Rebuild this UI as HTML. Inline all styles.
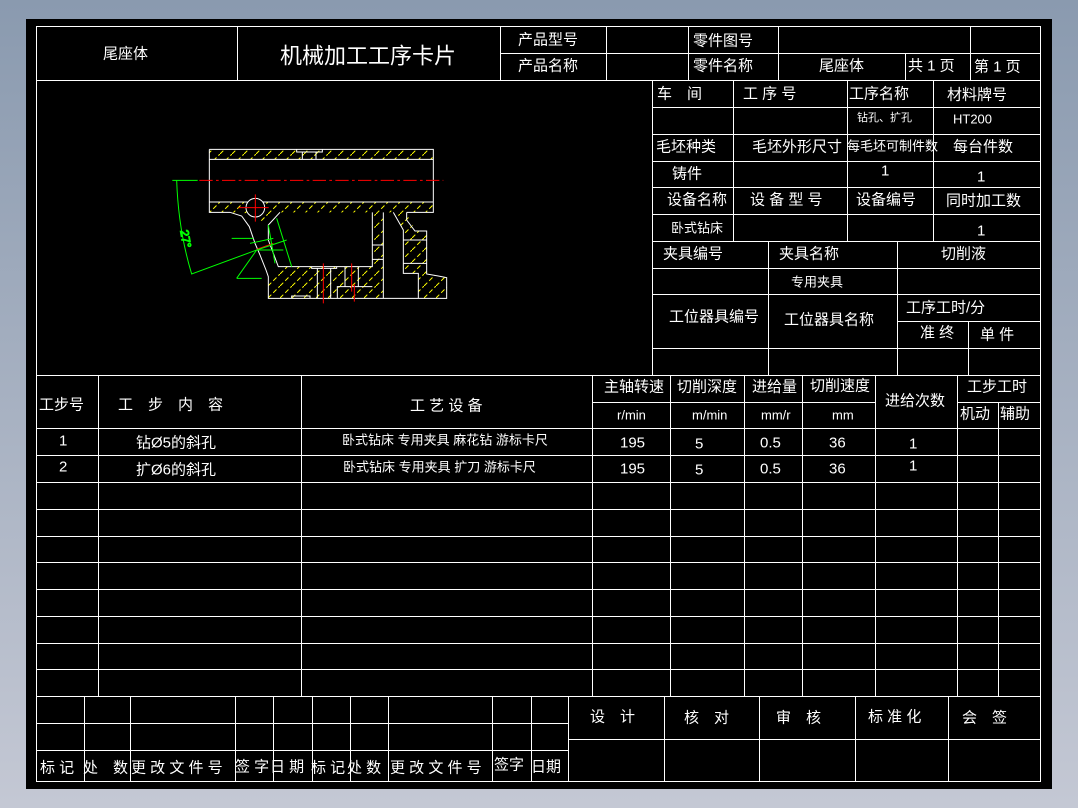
<!DOCTYPE html>
<html><head><meta charset="utf-8"><style>
html,body{margin:0;padding:0;width:1078px;height:808px;overflow:hidden;background:linear-gradient(#8a9aaf,#c4c8d4);}
svg{display:block}
text{font-family:"Liberation Sans","Noto Sans CJK SC",sans-serif;fill:#fff;font-size:15px;dominant-baseline:central}
.s{font-size:11px}.m{font-size:13px}
</style></head><body>
<svg width="1078" height="808" viewBox="0 0 1078 808">
<defs>
<pattern id="h" patternUnits="userSpaceOnUse" width="36" height="36">
<line x1="0" y1="36" x2="36" y2="0" stroke="#ffff00" stroke-width="3" stroke-dasharray="14 8"/>
</pattern>
</defs>
<rect x="26" y="19" width="1026" height="770" fill="#000"/>
<g stroke="#fff" stroke-width="1" fill="none" shape-rendering="crispEdges">
<rect x="36.5" y="26.5" width="1004" height="755"/>
<path d="M500 53.5H1040M36 80.5H1040M237.5 26V80M500.5 26V80M606.5 26V80M688.5 26V80M778.5 26V80M905.5 53V80M970.5 26V80"/>
<path d="M652.5 80V375M652 107.5H1040M652 134.5H1040M652 161.5H1040M652 187.5H1040M652 214.5H1040M652 241.5H1040M733.5 80V241M847.5 80V241M933.5 80V241"/>
<path d="M652 268.5H1040M652 294.5H1040M768.5 241V375M897.5 241V375M897 321.5H1040M652 348.5H1040M968.5 321V375"/>
<path d="M36 375.5H1040"/>
<path d="M98.5 375V696M301.5 375V696M592.5 375V696M670.5 375V696M744.5 375V696M802.5 375V696M875.5 375V696M957.5 375V696M998.5 402V696"/>
<path d="M592 402.5H875M957 402.5H1040M36 428.5H1040M36 455.5H1040M36 482.5H1040M36 509.5H1040M36 536.5H1040M36 562.5H1040M36 589.5H1040M36 616.5H1040M36 643.5H1040M36 669.5H1040M36 696.5H1040"/>
<path d="M36 723.5H568M36 750.5H568M568 739.5H1040M84.5 696V781M130.5 696V781M235.5 696V781M273.5 696V781M312.5 696V781M350.5 696V781M388.5 696V781M492.5 696V781M531.5 696V781M568.5 696V781M664.5 696V781M759.5 696V781M855.5 696V781M948.5 696V781"/>
</g>
<g transform="translate(160,130) scale(0.33333)" fill="none" stroke-width="3">
<g fill="url(#h)" stroke="none">
<rect x="148" y="58" width="672" height="30"/>
<polygon points="148,216 820,216 820,247 700,247 670,247 637,247 360,247 325,285 300,270 270,250 210,247 148,247"/>
<polygon points="325,505 325,440 360,410 637,410 637,247 670,247 670,505"/>
<polygon points="740,247 765,303 800,303 800,432 860,443 860,505 775,505 775,430 730,430 730,300 700,247"/>
</g>
<g stroke="#fff">
<path d="M148 58H820V247H740M148 58V247H210M148 88H820M148 216H820"/>
<path d="M410 58V66H487V58M427 66V88M468 66V88"/>
<path d="M210 247L245 258L268 290L285 340L300 375L318 420L325 440V505H860V443L835 438L800 432V303H765L740 270V247"/>
<path d="M360 247L325 285V330L355 410H637V247M637 345H670M637 388H670M670 247V505M700 247L730 300V430H775V505M730 330H800M730 400H800"/>
<path d="M455 410V415H530V410M472 415V505M512 415V505M532 505V470H637M555 410V470M595 410V470M395 505V498H450V505"/>
<circle cx="286" cy="233" r="28" fill="#000"/>
</g>
<g stroke="#ff0000">
<path d="M118 151H850" stroke-dasharray="40 10 8 10"/>
<path d="M236 233H326M286 193V275M290 358L340 340M490 400V520M575 400V485M583 462V515"/>
</g>
<g stroke="#00ff00">
<path d="M37 151H113M50 151Q55 300 95 432L290 360M230 445H305M230 445L290 360M215 325H280M270 340L340 325M325 285L345 400M350 265L395 410M290 360L380 330M290 360L370 360"/>
<text x="72" y="300" style="fill:#00ff00;font-size:36px" transform="rotate(80 72 300)">27°</text>
</g>
</g>
<text x="103" y="54">尾座体</text>
<text x="280" y="56" style="font-size:22px">机械加工工序卡片</text>
<text x="518" y="40">产品型号</text><text x="518" y="66">产品名称</text>
<text x="693" y="41">零件图号</text><text x="693" y="66">零件名称</text>
<text x="819" y="66">尾座体</text><text x="908" y="66">共 1 页</text><text x="974" y="67">第 1 页</text>
<text x="657" y="94">车　间</text><text x="743" y="94">工 序 号</text><text x="849" y="94">工序名称</text><text x="947" y="95">材料牌号</text>
<text class="s" x="857" y="118">钻孔、扩孔</text><text class="m" x="953" y="119">HT200</text>
<text x="656" y="147">毛坯种类</text><text x="752" y="147">毛坯外形尺寸</text><text class="m" x="847" y="146">每毛坯可制件数</text><text x="953" y="147">每台件数</text>
<text x="672" y="174">铸件</text><text x="881" y="171">1</text><text x="977" y="177">1</text>
<text x="667" y="200">设备名称</text><text x="750" y="200">设 备 型 号</text><text x="856" y="200">设备编号</text><text x="946" y="201">同时加工数</text>
<text class="m" x="671" y="228">卧式钻床</text><text x="977" y="231">1</text>
<text x="663" y="254">夹具编号</text><text x="779" y="254">夹具名称</text><text x="941" y="254">切削液</text>
<text class="m" x="791" y="282">专用夹具</text>
<text x="669" y="317">工位器具编号</text><text x="784" y="320">工位器具名称</text><text x="906" y="308">工序工时/分</text>
<text x="920" y="333">准 终</text><text x="980" y="335">单 件</text>
<text x="39" y="405">工步号</text><text x="118" y="405">工　步　内　容</text><text x="410" y="406">工 艺 设 备</text>
<text x="604" y="387">主轴转速</text><text x="677" y="387">切削深度</text><text x="752" y="387">进给量</text><text x="810" y="386">切削速度</text>
<text x="885" y="401">进给次数</text><text x="967" y="387">工步工时</text>
<text class="m" x="617" y="415">r/min</text><text class="m" x="692" y="415">m/min</text><text class="m" x="761" y="415">mm/r</text><text class="m" x="832" y="415">mm</text>
<text x="960" y="414">机动</text><text x="1000" y="414">辅助</text>
<text x="59" y="441">1</text><text x="136" y="443">钻Ø5的斜孔</text><text class="m" x="342" y="440">卧式钻床 专用夹具 麻花钻 游标卡尺</text>
<text x="620" y="443">195</text><text x="695" y="444">5</text><text x="760" y="443">0.5</text><text x="829" y="443">36</text><text x="909" y="444">1</text>
<text x="59" y="467">2</text><text x="136" y="470">扩Ø6的斜孔</text><text class="m" x="343" y="467">卧式钻床 专用夹具 扩刀 游标卡尺</text>
<text x="620" y="469">195</text><text x="695" y="470">5</text><text x="760" y="469">0.5</text><text x="829" y="469">36</text><text x="909" y="466">1</text>
<text x="40" y="768">标 记</text><text x="83" y="768">处　数</text><text x="131" y="768">更 改 文 件 号</text><text x="235" y="767">签 字</text><text x="270" y="767">日 期</text>
<text x="311" y="768">标 记</text><text x="347" y="768">处 数</text><text x="390" y="768">更 改 文 件 号</text><text x="494" y="765">签字</text><text x="531" y="767">日期</text>
<text x="590" y="717">设　计</text><text x="684" y="718">核　对</text><text x="776" y="718">审　核</text><text x="868" y="717">标 准 化</text><text x="962" y="718">会　签</text>
</svg>
</body></html>
